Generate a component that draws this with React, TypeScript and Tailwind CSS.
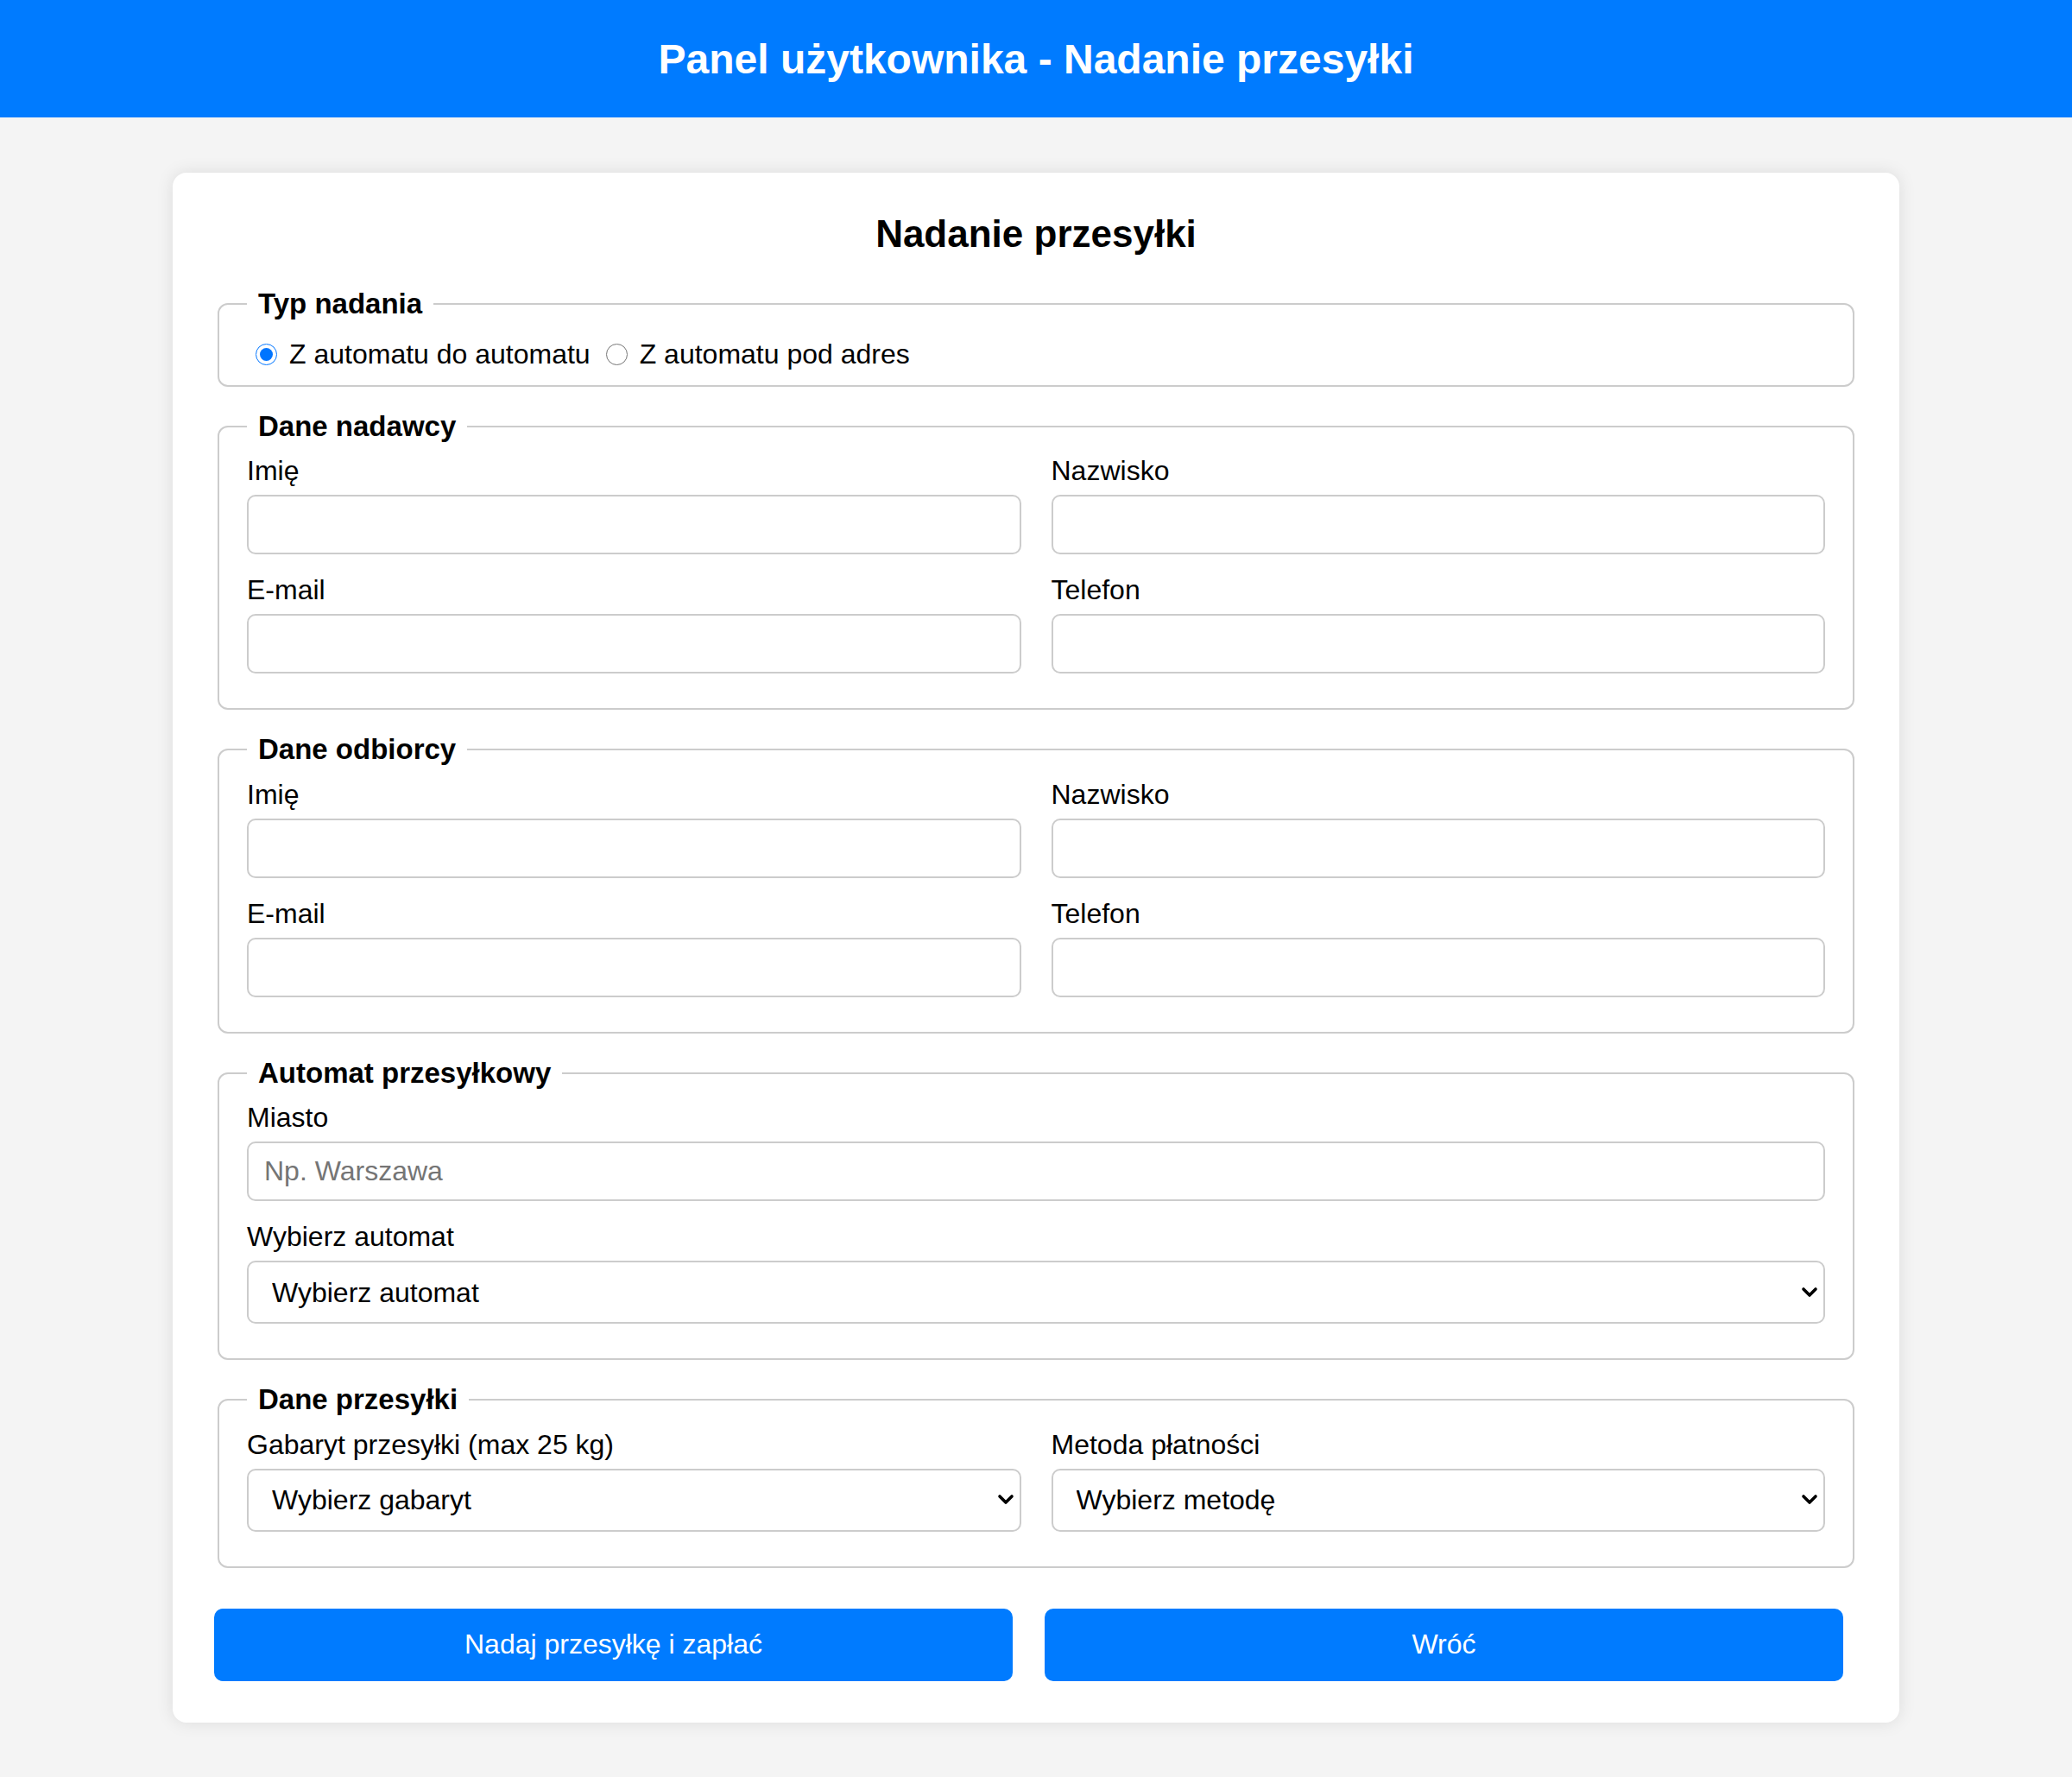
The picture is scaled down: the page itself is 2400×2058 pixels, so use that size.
import React from "react"

const Chevron = () => (
    <svg
        className="pointer-events-none absolute right-[8px] top-1/2 -translate-y-1/2"
        width="20"
        height="14"
        viewBox="0 0 20 14"
        fill="none"
    >
        <polyline points="3,3 10,10 17,3" stroke="#000" strokeWidth="3.6" strokeLinecap="round" strokeLinejoin="round" />
    </svg>
)

function Field({ label, placeholder }: { label: string; placeholder?: string }) {
    return (
        <div className="mb-[23px]">
            <label className="mb-[9px] block text-[32px] leading-[normal] text-black">{label}</label>
            <input
                type="text"
                placeholder={placeholder}
                className="box-border block h-[69px] w-full rounded-[10px] border-2 border-[#ccc] bg-white pl-[18px] text-[32px] text-black outline-none placeholder:text-[#757575]"
            />
        </div>
    )
}

function SelectField({ label, option }: { label: string; option: string }) {
    return (
        <div className="mb-[23px]">
            <label className="mb-[9px] block text-[32px] leading-[normal] text-black">{label}</label>
            <div className="relative">
                <select className="box-border block h-[73px] w-full appearance-none rounded-[10px] border-2 border-[#ccc] bg-white pl-[27px] text-[32px] text-black outline-none">
                    <option>{option}</option>
                </select>
                <Chevron />
            </div>
        </div>
    )
}

function Section({ title, top = "pt-[14.5px]", children }: { title: string; top?: string; children: React.ReactNode }) {
    return (
        <fieldset className={`mx-[4px] mb-[27px] rounded-[12px] border-2 border-[#ccc] px-[32px] pb-[17px] ${top}`}>
            <legend className="px-[13px] text-[33px] font-bold leading-[normal] text-black">{title}</legend>
            {children}
        </fieldset>
    )
}

function PersonFields() {
    return (
        <div className="grid grid-cols-2 gap-x-[35px]">
            <Field label="Imię" />
            <Field label="Nazwisko" />
            <Field label="E-mail" />
            <Field label="Telefon" />
        </div>
    )
}

export default function App() {
    return (
        <div className="min-h-screen bg-[#f4f4f4] font-['Liberation_Sans',Arial,sans-serif]">
            <header className="flex h-[136px] items-center justify-center bg-[#007bff]">
                <h1 className="text-[48px] font-bold leading-[normal] text-white">Panel użytkownika - Nadanie przesyłki</h1>
            </header>

            <main className="pt-[64px] pb-[64px]">
                <div className="mx-auto w-[2000px] rounded-[16px] bg-white px-[48px] pt-[46px] pb-[48px] shadow-[0_0_20px_rgba(0,0,0,0.1)]">
                    <h2 className="mb-[37px] text-center text-[44px] font-bold leading-[normal] text-black">Nadanie przesyłki</h2>

                    <Section title="Typ nadania" top="pt-[20.5px]">
                        <div className="flex items-center gap-[8px] text-[32px] leading-[normal] text-black">
                            <label className="inline-flex items-center">
                                <input type="radio" name="typ" defaultChecked className="ml-[10px] mr-[14px] h-[25px] w-[25px]" />
                                Z automatu do automatu
                            </label>
                            <label className="inline-flex items-center">
                                <input type="radio" name="typ" className="ml-[10px] mr-[14px] h-[25px] w-[25px]" />
                                Z automatu pod adres
                            </label>
                        </div>
                    </Section>

                    <Section title="Dane nadawcy">
                        <PersonFields />
                    </Section>

                    <Section title="Dane odbiorcy">
                        <PersonFields />
                    </Section>

                    <Section title="Automat przesyłkowy">
                        <Field label="Miasto" placeholder="Np. Warszawa" />
                        <SelectField label="Wybierz automat" option="Wybierz automat" />
                    </Section>

                    <Section title="Dane przesyłki">
                        <div className="grid grid-cols-2 gap-x-[35px]">
                            <SelectField label="Gabaryt przesyłki (max 25 kg)" option="Wybierz gabaryt" />
                            <SelectField label="Metoda płatności" option="Wybierz metodę" />
                        </div>
                    </Section>

                    <div className="mt-[47px] flex gap-[37px]">
                        <button className="h-[84px] w-[925px] rounded-[10px] bg-[#007bff] text-[32px] leading-[normal] text-white">
                            Nadaj przesyłkę i zapłać
                        </button>
                        <button className="h-[84px] w-[925px] rounded-[10px] bg-[#007bff] text-[32px] leading-[normal] text-white">
                            Wróć
                        </button>
                    </div>
                </div>
            </main>
        </div>
    )
}
